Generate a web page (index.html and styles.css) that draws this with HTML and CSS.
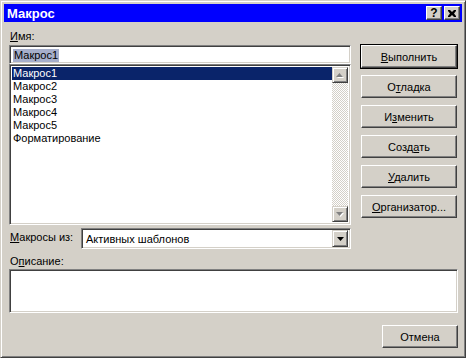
FILE: index.html
```html
<!DOCTYPE html>
<html lang="ru">
<head>
    <meta charset="UTF-8">
    <title>Макрос</title>
    <link rel="stylesheet" href="styles.css">
</head>
<body>
    <!-- Dialog window -->
    <div class="window">
        <div class="titlebar">
            <span class="title">Макрос</span>
            <div class="caption-buttons">
                <span class="cap-btn help">?</span>
                <span class="cap-btn close">
                    <svg width="8" height="7" viewBox="0 0 8 7"><path d="M0 0h2l2 2 2-2h2v1l-2 2.5 2 2.5v1h-2l-2-2-2 2h-2v-1l2-2.5-2-2.5z" fill="#000"/></svg>
                </span>
            </div>
        </div>

        <div class="content">
            <div class="top">
                <div class="left">
                    <label class="lbl"><u>И</u>мя:</label>
                    <div class="field name-field"><span class="sel-text">Макрос1</span></div>

                    <div class="field listbox">
                        <ul class="items">
                            <li class="selected">Макрос1</li>
                            <li>Макрос2</li>
                            <li>Макрос3</li>
                            <li>Макрос4</li>
                            <li>Макрос5</li>
                            <li>Форматирование</li>
                        </ul>
                        <div class="scrollbar">
                            <span class="sb-btn"><svg width="8" height="5" viewBox="0 0 8 5"><path d="M4.5 1L8 5H1z" fill="#fff"/><path d="M3.5 0L7 4H0z" fill="#808080"/></svg></span>
                            <span class="sb-track"></span>
                            <span class="sb-btn"><svg width="8" height="5" viewBox="0 0 8 5"><path d="M1 1h7L4.5 5z" fill="#fff"/><path d="M0 0h7L3.5 4z" fill="#808080"/></svg></span>
                        </div>
                    </div>

                    <div class="source-row">
                        <label class="lbl"><u>М</u>акросы из:</label>
                        <div class="field combo">
                            <span class="combo-text">Активных шаблонов</span>
                            <span class="sb-btn"><svg width="7" height="4" viewBox="0 0 7 4"><path d="M0 0h7L3.5 4z" fill="#000"/></svg></span>
                        </div>
                    </div>
                </div>

                <div class="buttons">
                    <button class="btn default"><u>В</u>ыполнить</button>
                    <button class="btn">О<u>т</u>ладка</button>
                    <button class="btn">И<u>з</u>менить</button>
                    <button class="btn">Созд<u>а</u>ть</button>
                    <button class="btn"><u>У</u>далить</button>
                    <button class="btn"><u>О</u>рганизатор...</button>
                </div>
            </div>

            <label class="lbl desc-lbl">О<u>п</u>исание:</label>
            <div class="field desc"></div>

            <div class="footer">
                <button class="btn">Отмена</button>
            </div>
        </div>
    </div>
</body>
</html>
```

FILE: styles.css
```css
/* Base */
body {
    margin: 0;
    font-family: 'Liberation Sans', Arial, sans-serif;
    font-size: 11px;
    color: #000;
}

u {
    text-decoration: underline;
    text-underline-offset: 1px;
}

/* Window frame */
.window {
    width: 466px;
    height: 358px;
    box-sizing: border-box;
    background: #d4d0c8;
    border: 1px solid;
    border-color: #d4d0c8 #404040 #404040 #d4d0c8;
    box-shadow: inset 1px 1px #fff, inset -1px -1px #808080;
    padding: 3px;
    display: flex;
    flex-direction: column;
}

/* Title bar */
.titlebar {
    height: 18px;
    background: #0000ff;
    display: flex;
    align-items: center;
    justify-content: space-between;
    padding: 0 2px 0 3px;
}

.title {
    color: #fff;
    font-weight: bold;
    font-size: 13px;
}

.caption-buttons {
    display: flex;
    gap: 2px;
}

.cap-btn {
    width: 16px;
    height: 14px;
    box-sizing: border-box;
    background: #d4d0c8;
    border: 1px solid;
    border-color: #fff #404040 #404040 #fff;
    box-shadow: inset -1px -1px #808080;
    display: flex;
    align-items: center;
    justify-content: center;
    font-weight: bold;
    font-size: 12px;
    line-height: 1;
}

/* Content */
.content {
    flex: 1;
    padding: 8px 4px 0 5px;
    display: flex;
    flex-direction: column;
}

.top {
    display: flex;
    justify-content: space-between;
}

.left {
    width: 342px;
    display: flex;
    flex-direction: column;
}

.lbl {
    display: block;
    height: 15px;
    line-height: 13px;
    padding-left: 1px;
}

/* Sunken fields */
.field {
    box-sizing: border-box;
    background: #fff;
    border: 1px solid;
    border-color: #808080 #fff #fff #808080;
    box-shadow: inset 1px 1px #404040, inset -1px -1px #d4d0c8;
}

.name-field {
    height: 19px;
    padding: 3px 0 0 3px;
}

.sel-text {
    background: #a6aeca;
    padding: 0 1px;
    line-height: 13px;
    display: inline-block;
}

.listbox {
    height: 161px;
    display: flex;
    padding: 2px;
}

.items {
    list-style: none;
    margin: 0;
    padding: 0;
    flex: 1;
}

.items li {
    height: 13px;
    line-height: 13px;
    padding-left: 1px;
}

.items .selected {
    background: #0a246a;
    color: #fff;
}

.scrollbar {
    width: 16px;
    display: flex;
    flex-direction: column;
}

.sb-track {
    flex: 1;
    background-color: #fff;
    background-image: repeating-conic-gradient(#d4d0c8 0 25%, #fff 0 50%);
    background-size: 2px 2px;
}

.sb-btn {
    width: 16px;
    height: 16px;
    box-sizing: border-box;
    background: #d4d0c8;
    border: 1px solid;
    border-color: #d4d0c8 #404040 #404040 #d4d0c8;
    box-shadow: inset 1px 1px #fff, inset -1px -1px #808080;
    display: flex;
    align-items: center;
    justify-content: center;
}

.source-row {
    display: flex;
    align-items: center;
    margin-top: 3px;
}

.source-row .lbl {
    width: 71px;
}

.combo {
    flex: 1;
    height: 21px;
    display: flex;
    align-items: center;
    padding: 2px;
}

.combo-text {
    flex: 1;
    padding-left: 2px;
}

.combo .sb-btn {
    height: 17px;
}

/* Buttons */
.buttons {
    display: flex;
    flex-direction: column;
    gap: 7px;
    margin-top: 15px;
    padding-right: 1px;
}

.btn {
    width: 96px;
    height: 23px;
    box-sizing: border-box;
    background: #d4d0c8;
    border: 1px solid;
    border-color: #fff #404040 #404040 #fff;
    box-shadow: inset -1px -1px #808080;
    font-family: inherit;
    font-size: 11px;
    color: #000;
    padding: 0;
}

.btn.default {
    outline: 1px solid #000;
    outline-offset: 0;
}

.desc-lbl {
    margin-top: 6px;
}

.desc {
    height: 44px;
    margin-top: -1px;
}

.footer {
    display: flex;
    justify-content: flex-end;
    margin-top: 12px;
}

.footer .btn {
    width: 76px;
}
```
